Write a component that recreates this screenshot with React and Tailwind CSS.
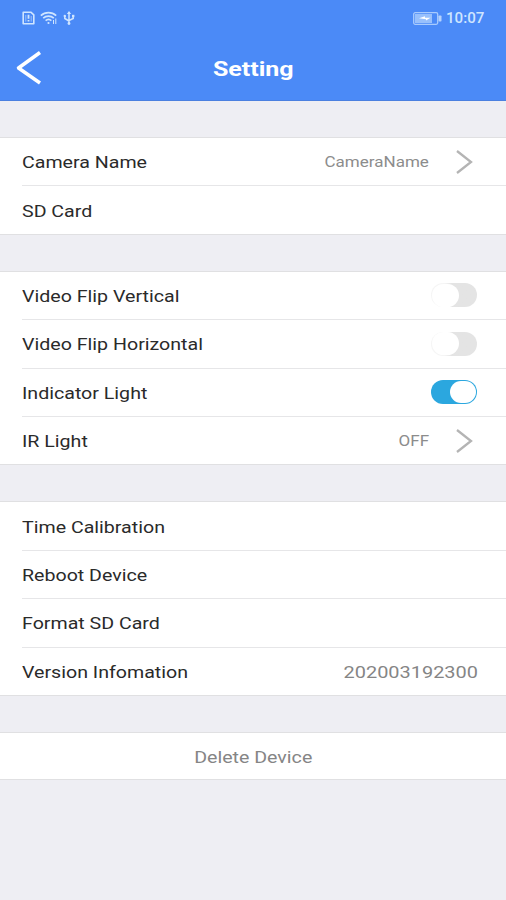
import { useState } from "react";

function StatusBar() {
  return (
    <div className="flex h-9 items-center justify-between pl-[22px] pr-[21px] text-[#cfe5ff]">
      <div className="flex items-center gap-[5px]">
        <svg width="13" height="14" viewBox="0 0 13 14" fill="none" stroke="currentColor" strokeWidth="1.6">
          <path d="M1.2 1.2h7.6l3 2.6v9H1.2z" strokeLinejoin="round" />
          <path d="M6.5 3.8v4M6.5 9v1.6" strokeWidth="1.8" />
          <path d="M3.8 4v6.6M9.2 5v5.6" strokeWidth=".6" />
        </svg>
        <svg width="18" height="14" viewBox="0 0 18 14" fill="none" stroke="currentColor" strokeWidth="1.6">
          <path d="M.8 4.6C5.2.6 11.8.6 16.2 4.6" />
          <path d="M3.2 7.2c3-2.800 7.600-2.800 10.600 0M5.600 9.600c1.700-1.500 4.100-1.500 5.800 0" />
          <circle cx="8.5" cy="12" r="1.1" fill="currentColor" stroke="none" />
          <path d="M13.500 9v4M15.800 7.500v5.500" strokeWidth="1" />
        </svg>
        <svg width="12" height="14" viewBox="0 0 12 14" fill="none" stroke="currentColor" strokeWidth="1.5">
          <path d="M6 1v12M1.800 5v2.500L6 10M10.200 4.500V7.500L6 9.500" />
          <path d="M6 0l2.200 3H3.800z" fill="currentColor" stroke="none" />
          <circle cx="1.8" cy="5" r="1.2" fill="currentColor" stroke="none" />
          <circle cx="6" cy="12.5" r="1.4" fill="currentColor" stroke="none" />
          <path d="M9 3.800h2.400v2.400H9z" fill="currentColor" stroke="none" />
        </svg>
      </div>
      <div className="flex items-center">
        <svg width="29" height="13" viewBox="0 0 29 13" fill="none">
          <rect x=".7" y=".7" width="24" height="11.6" rx="1.5" stroke="#a9cbfd" strokeWidth="1.3" />
          <rect x="2" y="2" width="17" height="9" fill="#98c0fc" />
          <path d="M6 6.300l6-2v1.400h5.500L13 8.600V7.300z" fill="#fff" />
          <rect x="25.5" y="3.5" width="3" height="6" rx=".8" fill="#b5d2fd" />
        </svg>
        <span className="ml-1 w-[39px] text-[14px] leading-none font-medium">
          <span className="inline-block origin-left scale-x-[1.08]">10:07</span>
        </span>
      </div>
    </div>
  );
}

function Header() {
  return (
    <header className="h-[101px] border-b border-[#4b80e0] bg-[#4b8af7]">
      <StatusBar />
      <div className="grid h-16 grid-cols-[60px_1fr_60px] items-center">
        <button className="pl-4" aria-label="Back">
          <svg width="26" height="34" viewBox="0 0 26 34" fill="none" stroke="#fff" strokeWidth="3.5">
            <path d="M24 1.500L2.500 17 24 32" strokeLinejoin="round" />
          </svg>
        </button>
        <h1 className="pt-0.5 text-center text-[20px] font-bold text-white">
          <span className="inline-block scale-x-[1.25]">Setting</span>
        </h1>
      </div>
    </header>
  );
}

function Section({ children }) {
  return <section className="border-y border-[#e0e0e2] bg-white">{children}</section>;
}

function Row({ label, last, children }) {
  return (
    <div className="pl-[22px]">
      <div
        className={`flex items-center justify-between ${
          last ? "h-[47.4px]" : "h-[48.4px] border-b border-[#e6e6e8]"
        }`}
      >
        <span className="origin-left scale-x-[1.225] pt-[3px] text-[16px] whitespace-nowrap text-[#2a2a2a]">
          {label}
        </span>
        {children}
      </div>
    </div>
  );
}

function Chevron() {
  return (
    <svg className="mr-[33px] ml-[26px]" width="18" height="26" viewBox="0 0 18 26" fill="none" stroke="#b4b4b4" strokeWidth="2.3">
      <path d="M2 2l14 11L2 24" />
    </svg>
  );
}

function LinkValue({ children }) {
  return (
    <div className="flex items-center">
      <span className="origin-right scale-x-[1.215] pt-0.5 text-[14px] text-[#8c8c8c]">{children}</span>
      <Chevron />
    </div>
  );
}

function Toggle({ label, defaultOn = false }) {
  const [on, setOn] = useState(defaultOn);
  return (
    <button
      role="switch"
      aria-checked={on}
      aria-label={label}
      onClick={() => setOn(!on)}
      className={`mr-[29px] flex h-6 w-[46px] items-center rounded-full ${
        on ? "justify-end bg-[#2ba7df] p-px" : "bg-linear-to-r from-[#f5f5f5] from-30% to-[#e4e4e4] to-45% pl-px"
      }`}
    >
      <span className={on ? "h-[22px] w-[26px] rounded-full bg-white" : "h-[23px] w-[27px] rounded-full bg-white"} />
    </button>
  );
}

export default function App() {
  return (
    <div className="flex h-[900px] w-full flex-col overflow-hidden bg-[#eeeef3] font-['Roboto',sans-serif]">
      <Header />
      <main className="flex flex-col gap-9 pt-9">
        <Section>
          <Row label="Camera Name">
            <LinkValue>CameraName</LinkValue>
          </Row>
          <Row label="SD Card" last />
        </Section>
        <Section>
          <Row label="Video Flip Vertical">
            <Toggle label="Video Flip Vertical" />
          </Row>
          <Row label="Video Flip Horizontal">
            <Toggle label="Video Flip Horizontal" />
          </Row>
          <Row label="Indicator Light">
            <Toggle label="Indicator Light" defaultOn />
          </Row>
          <Row label="IR Light" last>
            <LinkValue>OFF</LinkValue>
          </Row>
        </Section>
        <Section>
          <Row label="Time Calibration" />
          <Row label="Reboot Device" />
          <Row label="Format SD Card" />
          <Row label="Version Infomation" last>
            <span className="mr-7 origin-right scale-x-[1.245] pt-[3px] text-[16px] text-[#858585]">202003192300</span>
          </Row>
        </Section>
        <Section>
          <button className="flex h-[46px] w-full items-center justify-center pt-1 text-[16px] text-[#858585]">
            <span className="scale-x-[1.225]">Delete Device</span>
          </button>
        </Section>
      </main>
    </div>
  );
}
